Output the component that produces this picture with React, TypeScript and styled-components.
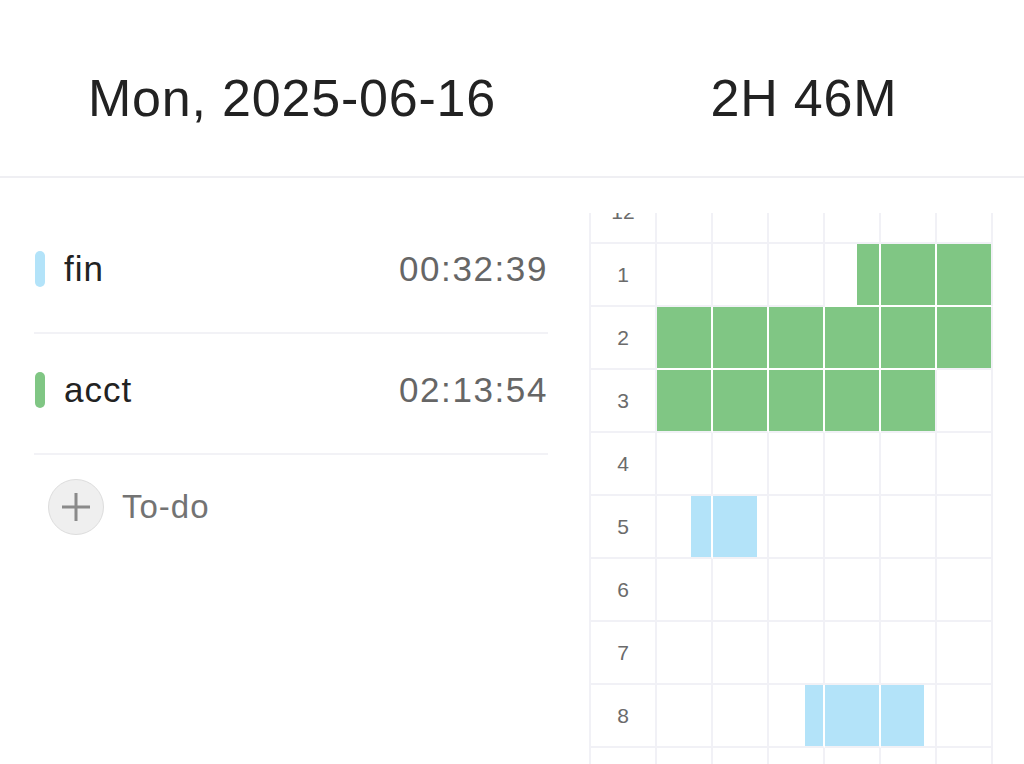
import React from 'react';
import styled, { createGlobalStyle } from 'styled-components';

// =============================================================================
// Data
// =============================================================================

const GREEN = '#80c684';
const BLUE = '#b3e3f9';
const LINE = '#f1f1f6';

interface ITask {
  id: string;
  name: string;
  color: string;
  total: string;
}

interface ISegment {
  hour: number;
  start: number; // minutes into the hour
  end: number;
  color: string;
}

const TASKS: ITask[] = [
  { id: 'fin', name: 'fin', color: BLUE, total: '00:32:39' },
  { id: 'acct', name: 'acct', color: GREEN, total: '02:13:54' },
];

const SEGMENTS: ISegment[] = [
  { hour: 1, start: 35.9, end: 60, color: GREEN },
  { hour: 2, start: 0, end: 60, color: GREEN },
  { hour: 3, start: 0, end: 50, color: GREEN },
  { hour: 5, start: 6.25, end: 18.2, color: BLUE },
  { hour: 8, start: 26.6, end: 48, color: BLUE },
];

const HOURS = [12, 1, 2, 3, 4, 5, 6, 7, 8, 9];
const SLOTS = [0, 1, 2, 3, 4, 5];

// =============================================================================
// Styled Components
// =============================================================================

const GlobalStyle = createGlobalStyle`
  html, body {
    margin: 0;
    padding: 0;
    background: #ffffff;
  }
  body {
    font-family: "Liberation Sans", Arial, sans-serif;
    color: #222222;
  }
  * {
    box-sizing: border-box;
  }
`;

const Screen = styled.div`
  display: flex;
  flex-direction: column;
  width: 1024px;
  height: 764px;
  overflow: hidden;
  background: #ffffff;
`;

const Header = styled.header`
  display: grid;
  grid-template-columns: 584px 1fr;
  align-items: center;
  flex-shrink: 0;
  height: 178px;
  padding-top: 20px;
  border-bottom: 2px solid #efeff3;
`;

const HeaderText = styled.h1`
  margin: 0;
  text-align: center;
  font-size: 52px;
  font-weight: 400;
  letter-spacing: 0.8px;
  color: #222222;
`;

const Body = styled.main`
  display: grid;
  grid-template-columns: 584px 1fr;
  flex: 1;
  min-height: 0;
`;

const TaskList = styled.section`
  display: flex;
  flex-direction: column;
  padding: 35px 36px 0 34px;
`;

const TaskRow = styled.div`
  display: flex;
  align-items: center;
  height: 121px;
  padding-bottom: 8px;
  border-bottom: 2px solid #f2f2f6;
`;

const ColorBar = styled.span<{ $color: string }>`
  width: 10px;
  height: 36px;
  margin-left: 1px;
  border-radius: 5px;
  background: ${(p) => p.$color};
`;

const TaskName = styled.span`
  flex: 1;
  margin-left: 19px;
  font-size: 35px;
  letter-spacing: 1px;
  color: #222222;
`;

const TaskTotal = styled.span`
  font-size: 35px;
  letter-spacing: 1.6px;
  color: #666666;
`;

const AddRow = styled.div`
  display: flex;
  align-items: center;
  gap: 18px;
  padding: 24px 0 0 14px;
`;

const AddButton = styled.button`
  display: flex;
  align-items: center;
  justify-content: center;
  width: 56px;
  height: 56px;
  padding: 0;
  border: 1.5px solid #dddddd;
  border-radius: 50%;
  background: #efefef;
`;

const AddLabel = styled.span`
  font-size: 33px;
  letter-spacing: 1px;
  color: #737373;
`;

const Timeline = styled.section`
  display: flex;
  flex-direction: column;
  min-height: 0;
  padding: 35px 0 0 5px;
`;

const Viewport = styled.div`
  flex: 1;
  min-height: 0;
  overflow: hidden;
`;

const Track = styled.div`
  margin-top: -32px;
  width: 404px;
  border-left: 2px solid ${LINE};
`;

const HourRow = styled.div`
  display: grid;
  grid-template-columns: 66px repeat(6, 56px);
  height: 63px;
`;

const HourLabel = styled.div`
  display: flex;
  align-items: center;
  justify-content: center;
  border-right: 2px solid ${LINE};
  border-bottom: 2px solid ${LINE};
  font-size: 21px;
  color: #6b6b6b;
`;

const Slot = styled.div<{ $joinRight: boolean; $joinBelow: boolean }>`
  position: relative;
  border-right: 2px solid ${(p) => (p.$joinRight ? '#ffffff' : LINE)};
  border-bottom: 2px solid ${(p) => (p.$joinBelow ? '#ffffff' : LINE)};
`;

const SlotFill = styled.span<{ $color: string }>`
  position: absolute;
  top: 0;
  bottom: 0;
  background: ${(p) => p.$color};
`;

// =============================================================================
// Components
// =============================================================================

const PlusIcon = () => (
  <svg width="32" height="32" viewBox="0 0 32 32">
    <path d="M16 2v28M2 16h28" stroke="#8a8a8a" strokeWidth="3" fill="none" />
  </svg>
);

const slotFill = (hour: number | undefined, slot: number) => {
  if (hour === undefined || slot > 5) return null;
  const from = slot * 10;
  const to = from + 10;
  const seg = SEGMENTS.find((s) => s.hour === hour && s.start < to && s.end > from);
  if (!seg) return null;
  const start = Math.max(seg.start, from);
  const end = Math.min(seg.end, to);
  return {
    color: seg.color,
    left: ((start - from) / 10) * 100,
    width: ((end - start) / 10) * 100,
    full: end >= to,
  };
};

const TimeGrid = () => (
  <Timeline>
    <Viewport>
      <Track>
        {HOURS.map((hour, i) => (
          <HourRow key={hour}>
            <HourLabel>{hour}</HourLabel>
            {SLOTS.map((slot) => {
              const fill = slotFill(hour, slot);
              const joinRight = !!fill?.full && !!slotFill(hour, slot + 1);
              const joinBelow = !!fill && !!slotFill(HOURS[i + 1], slot);
              return (
                <Slot key={slot} $joinRight={joinRight} $joinBelow={joinBelow}>
                  {fill && (
                    <SlotFill
                      $color={fill.color}
                      style={{ left: `${fill.left}%`, width: `${fill.width}%` }}
                    />
                  )}
                </Slot>
              );
            })}
          </HourRow>
        ))}
      </Track>
    </Viewport>
  </Timeline>
);

const App = () => (
  <>
    <GlobalStyle />
    <Screen>
      <Header>
        <HeaderText>Mon, 2025-06-16</HeaderText>
        <HeaderText>2H 46M</HeaderText>
      </Header>
      <Body>
        <TaskList>
          {TASKS.map((task) => (
            <TaskRow key={task.id}>
              <ColorBar $color={task.color} />
              <TaskName>{task.name}</TaskName>
              <TaskTotal>{task.total}</TaskTotal>
            </TaskRow>
          ))}
          <AddRow>
            <AddButton type="button" aria-label="Add to-do">
              <PlusIcon />
            </AddButton>
            <AddLabel>To-do</AddLabel>
          </AddRow>
        </TaskList>
        <TimeGrid />
      </Body>
    </Screen>
  </>
);

export default App;
